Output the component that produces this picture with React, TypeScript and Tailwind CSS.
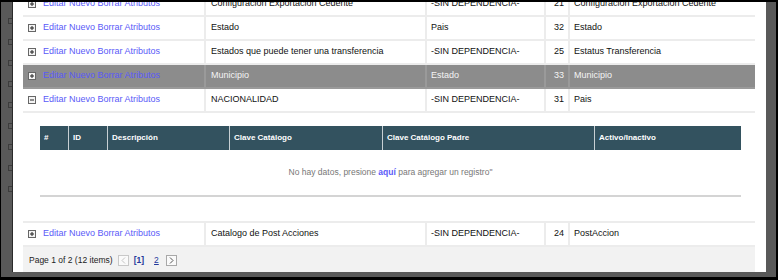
import React from "react";

type Row = { desc: string; parent: string; id: string; key: string; selected?: boolean; open?: boolean };

const rows: Row[] = [
  { desc: "Configuración Exportación Cedente", parent: "-SIN DEPENDENCIA-", id: "21", key: "Configuración Exportación Cedente" },
  { desc: "Estado", parent: "Pais", id: "32", key: "Estado" },
  { desc: "Estados que puede tener una transferencia", parent: "-SIN DEPENDENCIA-", id: "25", key: "Estatus Transferencia" },
  { desc: "Municipio", parent: "Estado", id: "33", key: "Municipio", selected: true },
  { desc: "NACIONALIDAD", parent: "-SIN DEPENDENCIA-", id: "31", key: "Pais", open: true },
];

const lastRow: Row = { desc: "Catalogo de Post Acciones", parent: "-SIN DEPENDENCIA-", id: "24", key: "PostAccion" };

const font = "font-['Liberation_Sans',Arial,sans-serif]";

function ExpandIcon({ open }: { open?: boolean }) {
  return (
    <svg width="8" height="8" viewBox="0 0 8 8" className="shrink-0">
      <rect x="0.5" y="0.5" width="7" height="7" fill="#f4f4f4" stroke="#666" />
      <path d="M2 4h4" stroke="#222" />
      {!open && <path d="M4 2v4" stroke="#222" />}
    </svg>
  );
}

function CatalogRow({ row }: { row: Row }) {
  const cell = row.selected ? "border-[#9a9a9a]" : "border-[#ececec]";
  const text = row.selected ? "text-[#f4f4f4]" : "text-[#111]";
  return (
    <div className={`flex h-[24px] border-b-2 ${cell} ${row.selected ? "bg-[#8c8c8c]" : "bg-white"} ${text}`}>
      <div className={`flex w-[183px] items-center gap-[7px] border-r-2 pl-[5px] ${cell}`}>
        <ExpandIcon open={row.open} />
        <span className="text-[#5a5af8]">Editar Nuevo Borrar Atributos</span>
      </div>
      <div className={`flex w-[221px] items-center border-r-2 pl-[5px] ${cell}`}>{row.desc}</div>
      <div className={`flex w-[119px] items-center border-r-2 pl-[4px] ${cell}`}>{row.parent}</div>
      <div className={`flex w-[24px] items-center justify-end border-r-2 pr-[4px] ${cell}`}>{row.id}</div>
      <div className="flex flex-1 items-center pl-[4px]">{row.key}</div>
    </div>
  );
}

const detailCols = [
  { label: "#", w: "w-[29px]" },
  { label: "ID", w: "w-[39px]" },
  { label: "Descripción", w: "w-[122px]" },
  { label: "Clave Catálogo", w: "w-[153px]" },
  { label: "Clave Catálogo Padre", w: "w-[212px]" },
  { label: "Activo/Inactivo", w: "flex-1" },
];

function DetailPanel() {
  return (
    <div className="h-[110px] border-b-2 border-[#ececec] bg-white pl-[17px] pr-[14px] pt-[13px]">
      <div className="flex h-[24px] bg-[#33525f] text-[8px] font-bold text-white">
        {detailCols.map((c, i) => (
          <div
            key={c.label}
            className={`flex items-center pl-[4px] ${c.w} ${i < detailCols.length - 1 ? "border-r border-[#c8d0d4]" : ""}`}
          >
            {c.label}
          </div>
        ))}
      </div>
      <div className="flex h-[47px] items-center justify-center border-b-2 border-[#d4d4d4] text-[8.5px] text-[#777]">
        No hay datos, presione&nbsp;<span className="font-bold text-[#5a5af8]">aquí</span>&nbsp;para agregar un registro"
      </div>
    </div>
  );
}

function Pager() {
  return (
    <div className="flex h-[26px] items-center bg-[#f2f2f2] pl-[6px] text-[8.5px] text-[#222]">
      <span>Page 1 of 2 (12 items)</span>
      <span className="ml-[5px] flex h-[11px] w-[11px] items-center justify-center border border-[#c8c8c8] bg-[#fafafa] text-[#c4c4c4]">
        <svg width="5" height="7" viewBox="0 0 5 7">
          <path d="M4 0.5L1 3.5L4 6.5" fill="none" stroke="currentColor" />
        </svg>
      </span>
      <span className="ml-[5px] font-bold text-[#23399b]">[1]</span>
      <span className="ml-[10px] text-[#23399b] underline">2</span>
      <span className="ml-[7px] flex h-[11px] w-[11px] items-center justify-center border border-[#a8a8a8] bg-[#fafafa] text-[#555]">
        <svg width="5" height="7" viewBox="0 0 5 7">
          <path d="M1 0.5L4 3.5L1 6.5" fill="none" stroke="currentColor" />
        </svg>
      </span>
    </div>
  );
}

export default function App() {
  return (
    <div
      className={`flex h-[280px] w-[778px] border-b-[3px] border-l border-r-2 border-t-2 border-black bg-[#595959] pb-[5px] pr-[10px] ${font} text-[9px]`}
    >
      {/* page behind the overlay, mostly hidden */}
      <div className="flex w-[11px] flex-col gap-[15px] overflow-hidden pl-[7px] pt-[16px]">
        {[0, 1, 2, 3, 4, 5, 6, 7, 8].map((i) => (
          <div key={i} className="h-[6px] w-[6px] shrink-0 border border-[#3c3c3c]" />
        ))}
      </div>
      <div className="flex-1 overflow-hidden border-l border-[#2a2a2a] bg-white pl-[10px] pr-[11px]">
        <div className="-mt-[9px]">
          {rows.map((r) => (
            <React.Fragment key={r.id}>
              <CatalogRow row={r} />
              {r.open && <DetailPanel />}
            </React.Fragment>
          ))}
          <CatalogRow row={lastRow} />
          <Pager />
        </div>
      </div>
    </div>
  );
}
